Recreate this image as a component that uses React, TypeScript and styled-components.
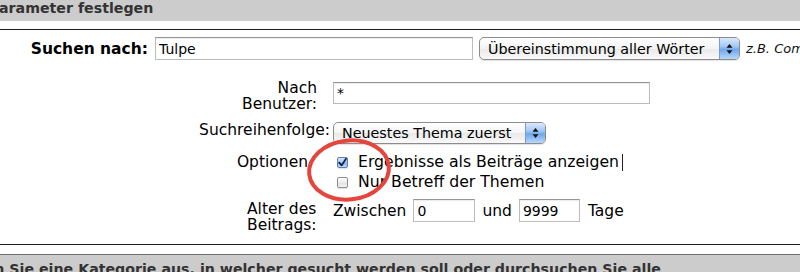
import React from "react";
import styled, { createGlobalStyle } from "styled-components";

const GlobalStyle = createGlobalStyle`
  html, body { margin: 0; padding: 0; background: #fff; overflow: hidden; }
  body { width: 800px; height: 272px; font-family: "DejaVu Sans", Verdana, sans-serif; color: #000; }
`;

const Page = styled.div`
  position: relative;
  width: 800px;
  height: 272px;
  overflow: hidden;
`;

const SectionBar = styled.div<{ $indent: number }>`
  background: #cccccc;
  color: #333;
  font-weight: bold;
  font-size: 14.2px;
  line-height: 16px;
  white-space: nowrap;
  text-indent: ${(p) => p.$indent}px;
`;

const HeaderBar = styled(SectionBar)`
  height: 21px;
  box-sizing: border-box;
  padding-top: 0;
`;

const FooterBar = styled(SectionBar)`
  margin-top: 9px;
  border-top: 1px solid #6f6f6f;
  padding-top: 6px;
  height: 30px;
`;

const Form = styled.div`
  margin-top: 8px;
  border-top: 1px solid #1c1c1c;
  border-bottom: 1px solid #1c1c1c;
  padding-bottom: 11px;
  font-size: 15.5px;
`;

const SearchRow = styled.div`
  display: flex;
  align-items: center;
  height: 23px;
  margin-top: 7px;
  white-space: nowrap;
`;

const SearchLabel = styled.div`
  width: 148px;
  margin-right: 7px;
  text-align: right;
  font-weight: bold;
  flex: none;
`;

const TextField = styled.input<{ $w: number; $h: number; $mt?: number }>`
  width: ${(p) => p.$w}px;
  height: ${(p) => p.$h}px;
  margin: ${(p) => p.$mt ?? 0}px 0 0 0;
  box-sizing: border-box;
  border: 1px solid #bcbcbc;
  border-top-color: #959595;
  box-shadow: inset 0 1px 1px rgba(0, 0, 0, 0.08);
  padding: 0 3px;
  font-family: "DejaVu Sans", Verdana, sans-serif;
  font-size: 14px;
  color: #000;
  background: #fff;
  outline: none;
  flex: none;
`;

const SelectBox = styled.div<{ $w: number; $h: number; $ml?: number }>`
  display: flex;
  align-items: stretch;
  width: ${(p) => p.$w}px;
  height: ${(p) => p.$h}px;
  margin-left: ${(p) => p.$ml ?? 0}px;
  box-sizing: border-box;
  border: 1px solid #8c8c8c;
  border-radius: 5px;
  background: linear-gradient(#ffffff, #f4f4f4 50%, #e9e9e9 51%, #f9f9f9);
  box-shadow: 0 1px 1px rgba(0, 0, 0, 0.12);
  font-size: 14.3px;
  overflow: hidden;
  flex: none;
`;

const SelectText = styled.span`
  flex: 1;
  display: flex;
  align-items: center;
  padding-left: 8px;
  white-space: nowrap;
  overflow: hidden;
`;

const SelectArrows = styled.span`
  width: 19px;
  flex: none;
  border-left: 1px solid #7c9bc8;
  background: linear-gradient(#dbe9fb, #a2c8f4 40%, #70a7ec 55%, #b6d8fb);
  display: flex;
  align-items: center;
  justify-content: center;
`;

const Hint = styled.span`
  margin-left: 6px;
  font-style: italic;
  font-size: 13px;
  color: #111;
`;

const FieldRow = styled.div<{ $mt: number }>`
  display: flex;
  align-items: flex-start;
  margin-top: ${(p) => p.$mt}px;
`;

const FieldLabel = styled.div<{ $align?: "left" | "right"; $pr?: number; $pl?: number; $pt?: number }>`
  width: 330px;
  flex: none;
  box-sizing: border-box;
  margin-right: 3px;
  text-align: ${(p) => p.$align ?? "right"};
  padding-right: ${(p) => p.$pr ?? 0}px;
  padding-left: ${(p) => p.$pl ?? 0}px;
  padding-top: ${(p) => p.$pt ?? 0}px;
  line-height: 16px;
  white-space: nowrap;
`;

const Options = styled.div`
  display: flex;
  flex-direction: column;
  font-size: 15.7px;
`;

const OptionLine = styled.label`
  display: flex;
  align-items: center;
  height: 20px;
  line-height: 20px;
  padding-left: 4px;
  white-space: nowrap;
`;

const CheckBox = styled.span<{ $checked?: boolean }>`
  position: relative;
  display: inline-flex;
  align-items: center;
  justify-content: center;
  width: 11px;
  height: 11px;
  box-sizing: border-box;
  margin-right: 10px;
  border: 1px solid ${(p) => (p.$checked ? "#5f7fae" : "#8e8e8e")};
  border-radius: 2px;
  background: ${(p) =>
    p.$checked
      ? "linear-gradient(#d6e7fb, #a3c7f2 50%, #7fb0ee 51%, #c0dcfb)"
      : "linear-gradient(#ffffff, #ececec 50%, #e0e0e0 51%, #f4f4f4)"};
  box-shadow: 0 1px 1px rgba(0, 0, 0, 0.12);
  flex: none;
`;

const Caret = styled.span`
  display: inline-block;
  width: 1px;
  height: 17px;
  margin-left: 3px;
  background: #222;
`;

const AgeControls = styled.div`
  display: flex;
  align-items: center;
  height: 23px;
  white-space: nowrap;
`;

const Gap = styled.span<{ $w: number }>`
  display: inline-block;
  width: ${(p) => p.$w}px;
  flex: none;
`;

const Annotation = styled.svg`
  position: absolute;
  left: 300px;
  top: 128px;
  pointer-events: none;
`;

const Arrows = () => (
  <svg width="7" height="12" viewBox="0 0 7 12">
    <path d="M3.5 1 L6.5 4.8 L0.5 4.8 Z" fill="#111" />
    <path d="M3.5 11 L6.5 7.2 L0.5 7.2 Z" fill="#111" />
  </svg>
);

const Select = ({ w, h, ml, children }: { w: number; h: number; ml?: number; children: React.ReactNode }) => (
  <SelectBox $w={w} $h={h} $ml={ml}>
    <SelectText>{children}</SelectText>
    <SelectArrows>
      <Arrows />
    </SelectArrows>
  </SelectBox>
);

export default function App() {
  return (
    <Page>
      <GlobalStyle />
      <HeaderBar $indent={-11}>Parameter festlegen</HeaderBar>
      <Form>
        <SearchRow>
          <SearchLabel>Suchen nach:</SearchLabel>
          <TextField $w={318} $h={23} readOnly value="Tulpe" />
          <Select w={261} h={23} ml={6}>
            Übereinstimmung aller Wörter
          </Select>
          <Hint>z.B. Computer</Hint>
        </SearchRow>

        <FieldRow $mt={20}>
          <FieldLabel $pr={13}>
            Nach
            <br />
            Benutzer:
          </FieldLabel>
          <TextField $w={317} $h={22} $mt={2} readOnly value="*" />
        </FieldRow>

        <FieldRow $mt={10}>
          <FieldLabel>Suchreihenfolge:</FieldLabel>
          <Select w={213} h={22}>
            Neuestes Thema zuerst
          </Select>
        </FieldRow>

        <FieldRow $mt={8}>
          <FieldLabel $pr={22} $pt={2}>
            Optionen
          </FieldLabel>
          <Options>
            <OptionLine>
              <CheckBox $checked>
                <svg width="9" height="9" viewBox="0 0 9 9">
                  <path d="M1.2 4.6 L3.6 7.4 L8 0.8" fill="none" stroke="#14244a" strokeWidth="1.8" strokeLinecap="round" strokeLinejoin="round" />
                </svg>
              </CheckBox>
              Ergebnisse als Beiträge anzeigen
              <Caret />
            </OptionLine>
            <OptionLine>
              <CheckBox />
              Nur Betreff der Themen
            </OptionLine>
          </Options>
        </FieldRow>

        <FieldRow $mt={7}>
          <FieldLabel $align="left" $pl={247} $pt={2}>
            Alter des
            <br />
            Beitrags:
          </FieldLabel>
          <AgeControls>
            Zwischen
            <Gap $w={7} />
            <TextField $w={62} $h={23} readOnly value="0" />
            <Gap $w={7} />
            und
            <Gap $w={7} />
            <TextField $w={61} $h={23} readOnly value="9999" />
            <Gap $w={8} />
            Tage
          </AgeControls>
        </FieldRow>
      </Form>
      <FooterBar $indent={-55}>
        Wählen Sie eine Kategorie aus, in welcher gesucht werden soll oder durchsuchen Sie alle
      </FooterBar>
      <Annotation width="100" height="80" viewBox="0 0 100 80">
        <ellipse cx="49" cy="42" rx="40" ry="29.5" fill="none" stroke="#e5453c" strokeWidth="4" transform="rotate(-6 49 42)" />
      </Annotation>
    </Page>
  );
}
